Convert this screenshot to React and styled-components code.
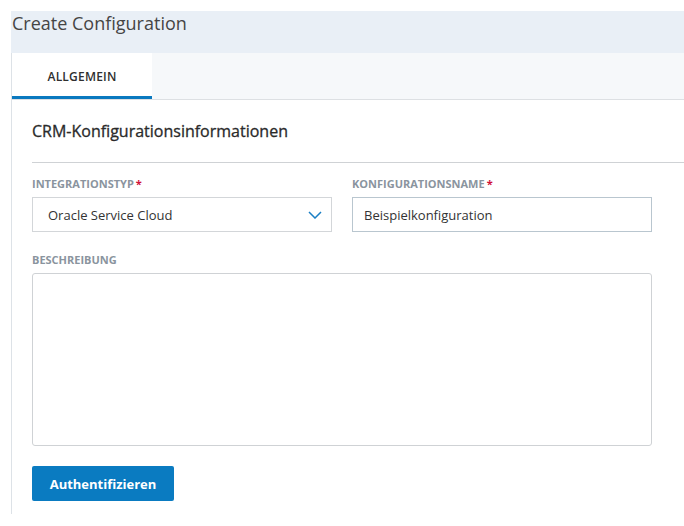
import React from "react";
import styled, { createGlobalStyle } from "styled-components";

const Global = createGlobalStyle`
  html, body { margin: 0; padding: 0; background: #fff; }
  body { font-family: "Open Sans", "Noto Sans", sans-serif; color: #333; }
  * { box-sizing: border-box; }
`;

const Page = styled.div`
  padding: 11px 0 0 11px;
  width: 684px;
`;

const Header = styled.div`
  height: 42px;
  background: #e9eff6;
`;

const Title = styled.h1`
  margin: 0;
  padding-left: 1px;
  font-size: 18px;
  font-weight: 400;
  line-height: 24px;
  color: #454545;
`;

const Body = styled.div`
  border-left: 1px solid #dde2e7;
`;

const TabBar = styled.div`
  display: flex;
  height: 47px;
  background: #f6f8fa;
  border-bottom: 1px solid #dde0e3;
`;

const Tab = styled.div`
  width: 140px;
  display: flex;
  align-items: center;
  justify-content: center;
  background: ${(p) => (p.$active ? "#fff" : "transparent")};
  border-bottom: 3px solid ${(p) => (p.$active ? "#0a79bf" : "transparent")};
  font-size: 12px;
  font-weight: 600;
  color: #2f2f2f;
  letter-spacing: 0.2px;
  padding-top: 3px;
`;

const Content = styled.div`
  padding: 19px 0 13px 20px;
`;

const SectionTitle = styled.h2`
  margin: 0;
  font-size: 16px;
  font-weight: 400;
  -webkit-text-stroke: 0.3px #2a2a2a;
  line-height: 24px;
  color: #2a2a2a;
  padding-bottom: 19px;
  border-bottom: 1px solid #cfd2d5;
`;

const Grid = styled.div`
  display: grid;
  grid-template-columns: 300px 300px;
  column-gap: 20px;
  row-gap: 20px;
  padding-top: 13px;
`;

const Field = styled.div`
  display: flex;
  flex-direction: column;
  grid-column: ${(p) => (p.$wide ? "1 / span 2" : "auto")};
`;

const Label = styled.label`
  font-size: 11px;
  font-weight: 700;
  color: #8a949e;
  line-height: 16px;
  margin-bottom: 5px;
  text-transform: uppercase;
`;

const Req = styled.span`
  color: #d0103a;
  margin-left: 2px;
`;

const Select = styled.div`
  height: 35px;
  border: 1px solid #d3d6d9;
  display: flex;
  align-items: center;
  justify-content: space-between;
  padding: 0 9px 0 15px;
  font-size: 13px;
  color: #333;
`;

const Input = styled.div`
  height: 35px;
  border: 1px solid #b9c6cf;
  display: flex;
  align-items: center;
  padding: 0 11px;
  font-size: 13px;
  color: #333;
`;

const TextArea = styled.div`
  height: 173px;
  border: 1px solid #cfd2d5;
  border-radius: 3px;
`;

const Button = styled.button`
  margin-top: 20px;
  width: 142px;
  height: 35px;
  border: none;
  border-radius: 2px;
  background: #0a7bc1;
  color: #fff;
  font-family: inherit;
  font-size: 13px;
  font-weight: 700;
  display: block;
`;

export default function App() {
  return (
    <>
      <Global />
      <Page>
        <Header>
          <Title>Create Configuration</Title>
        </Header>
        <Body>
          <TabBar>
            <Tab $active>ALLGEMEIN</Tab>
          </TabBar>
          <Content>
            <SectionTitle>CRM-Konfigurationsinformationen</SectionTitle>
            <Grid>
              <Field>
                <Label>Integrationstyp<Req>*</Req></Label>
                <Select>
                  <span>Oracle Service Cloud</span>
                  <svg width="14" height="8" viewBox="0 0 14 8">
                    <path d="M1 1 L7 7 L13 1" fill="none" stroke="#1a7fc4" strokeWidth="1.5" />
                  </svg>
                </Select>
              </Field>
              <Field>
                <Label>Konfigurationsname<Req>*</Req></Label>
                <Input>Beispielkonfiguration</Input>
              </Field>
              <Field $wide>
                <Label>Beschreibung</Label>
                <TextArea />
              </Field>
            </Grid>
            <Button>Authentifizieren</Button>
          </Content>
        </Body>
      </Page>
    </>
  );
}
